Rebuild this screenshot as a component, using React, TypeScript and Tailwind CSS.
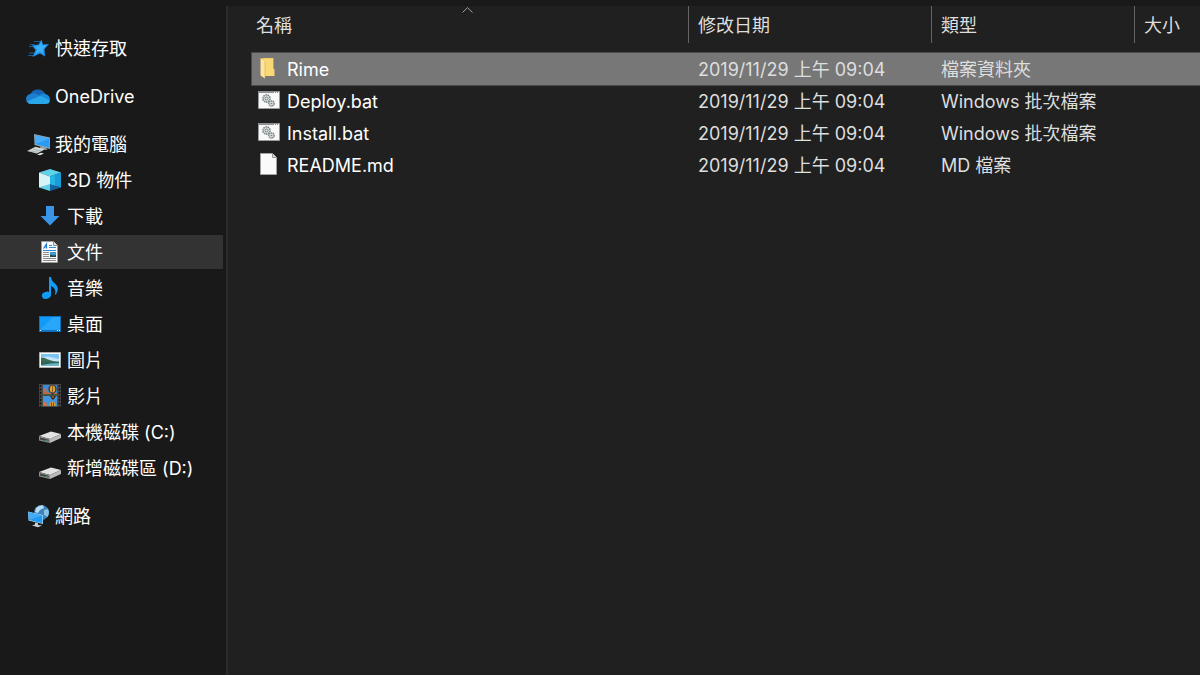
import type { ReactNode } from 'react';

const Svg = ({ children }: { children: ReactNode }) => (
  <svg viewBox="0 0 24 24" className="w-6 h-6 shrink-0" aria-hidden="true">
    {children}
  </svg>
);

const StarIcon = () => (
  <Svg>
    <path d="M8 5.5h6M4 8.5h5M3 10.5h5M3 17h5M2 19.5h5" stroke="#1b6fae" strokeWidth=".8" />
    <path d="M15.5 3.500 17 8.500 23 8 18.500 13 19 20.500 14 17.500 6.500 21 9.500 14 6 9.500 12.500 8.500Z" fill="#1f93ea" />
    <path d="M15.200 6 16.300 9.500 20.500 9.300 17 13 17.500 18 13.800 15.800 9 18.200 11.200 13.500 8.500 10.300 13.200 9.800Z" fill="#38b0fb" />
  </Svg>
);

const OneDriveIcon = () => (
  <Svg>
    <path d="M4.5 11.5a7.500 6.800 0 0 1 14.500-1.500L12 16Z" fill="#1565b4" />
    <path d="M5.5 9.500Q9 8.500 11.500 10.500L18 14 12 20H5A5 5 0 0 1 0 15Q0 10.500 5.500 9.500Z" fill="#1b7fd0" />
    <path d="M13 12Q15.500 8.500 19 9.700 24 11 24 16L19 17Z" fill="#1a8ad8" />
    <path d="M1 17.500 13 12.300Q15 11.500 17 13L24 16.500Q23.500 20 20 20H5Q2.200 20 1 17.500Z" fill="#29a5ea" />
  </Svg>
);

const ComputerIcon = () => (
  <Svg>
    <path d="M8 2 24 5.500V17L8.500 13Z" fill="#8fa6b5" />
    <path d="M9 3.300 23.500 6.500V15.800L9.300 12Z" fill="#2a9bf4" />
    <path d="M9 3.300 23.500 6.500 9.300 12Z" fill="#48adf9" />
    <path d="M13.500 14 20 15.500 21.500 18 15 17Z" fill="#98a3a6" />
    <path d="M1 19 9.500 14.800 19 17.300 11 21.500Z" fill="#cfd8d6" />
    <path d="M4 18.800 13 20.500M7 17.300 15.500 19.200" stroke="#8f9a9b" strokeWidth=".6" />
    <path d="M11 22.500 15 20.800 18 21.500 14 23.300Z" fill="#dce3e2" />
  </Svg>
);

const CubeIcon = () => (
  <Svg>
    <path d="M1 4.500 12 1 23 4.500 12 8.500Z" fill="#5cd3ea" />
    <path d="M1 4.500 12 8.500V17L1 19.500Z" fill="#d5f4f8" />
    <path d="M12 8.500 23 4.500V19.500L12 16.500Z" fill="#1b9cd9" />
    <path d="M1 19.500 12 16 12 23Z" fill="#62cfe5" />
    <path d="M12 16 23 19.500 12 23Z" fill="#1463a3" />
    <path d="M12 8.500 17 6.700V17.500L12 16Z" fill="#27b4e6" />
  </Svg>
);

const DownloadIcon = () => (
  <Svg>
    <path d="M8 2h8v10h5.500L12 21.500 2.500 12H8Z" fill="#3a94e8" />
  </Svg>
);

const DocumentIcon = () => (
  <Svg>
    <path d="M3.500 1.500H15.500L19.500 5.500V22.500H3.500Z" fill="#fafafa" stroke="#9b9b9b" />
    <path d="M15.500 1.500V5.500H19.500" fill="#e0e0e0" stroke="#8c8c8c" />
    <path d="M5.500 8.500 8.500 4V8.500M6.500 7H9" fill="none" stroke="#1e7fd0" strokeWidth="1.200" />
    <path d="M11 5.500h3M11 7.500h7M5 10.500h13" stroke="#2d8fdc" />
    <path d="M5 12.500h6M5 14.500h6M5 16.500h6M5 18.500h13M5 20.500h13" stroke="#8d8d8d" />
    <path d="M12 12h6v5h-6Z" fill="#3b9bd0" />
    <path d="M12 14.500 15 15.500 18 15V17H12Z" fill="#20454f" />
  </Svg>
);

const MusicIcon = () => (
  <Svg>
    <ellipse cx="8.300" cy="19.300" rx="4.500" ry="3.500" transform="rotate(-15 8.300 19.300)" fill="#119cf7" />
    <path d="M11 1h2Q13.500 5 17 7.500 22 12 18 18.500L16.800 18.500Q19 12.500 13 10V20H11Z" fill="#119cf7" />
  </Svg>
);

const DesktopIcon = () => (
  <Svg>
    <path d="M1 4h22v16H1Z" fill="#1271bd" />
    <path d="M2 5h20v13H2Z" fill="#119af6" />
    <path d="M2 18 15 5H22V18Z" fill="#27a6fa" />
    <path d="M2 18.500h1M19 18.500h1M21 18.500h1" stroke="#e8f4fc" />
  </Svg>
);

const PictureIcon = () => (
  <Svg>
    <path d="M1.500 4.500h21v15h-21Z" fill="#fafafa" stroke="#aeaeae" />
    <path d="M3 6h18v12H3Z" fill="#7bc4f3" />
    <path d="M3 9.500 10 8.500 21 11V14H3Z" fill="#c6e6f6" />
    <path d="M3 9.500Q7 9.500 10 11.500L18 14H3Z" fill="#3e6e58" />
    <path d="M3 14H21V18H3Z" fill="#6db4c9" />
    <path d="M3 13.500H21V15L13 15.500 3 17Z" fill="#2c6455" />
  </Svg>
);

const VideoIcon = () => (
  <Svg>
    <path d="M1 0h22v23H1Z" fill="#4a4a4a" />
    <path d="M2.500 1V23M21.500 1V23" stroke="#141414" strokeWidth="1.500" strokeDasharray="2 1.500" />
    <path d="M5 1h14v10H5Z" fill="#3c8bd9" />
    <path d="M5 12h14v10H5Z" fill="#4494de" />
    <path d="M5 8.500 8 7 11 9H19V11H5Z" fill="#c0643c" />
    <path d="M5 10h14v1H5Z" fill="#38663a" />
    <circle cx="14.500" cy="5" r="4" fill="#3b2a18" />
    <ellipse cx="14.500" cy="5" rx="2.800" ry="3.600" fill="#e2a02f" />
    <path d="M14.500 1.500v7" stroke="#6b4418" strokeWidth=".7" />
    <path d="M13.500 9h2v1.500h-2Z" fill="#3c2614" />
    <circle cx="7" cy="6" r="1.500" fill="#d66a3e" />
    <path d="M12 12h6L16.500 14.500 15 16 13.500 14.500Z" fill="#34261e" />
    <path d="M14 12.500h2v1h-2Z" fill="#d79428" />
    <path d="M5 22V18.500L8 17.500 9 22Z" fill="#dc7038" />
    <path d="M11.500 22Q11.500 17.500 14.500 17.500 17.500 17.500 17.500 22Z" fill="#d99a2c" />
    <path d="M13.500 18.500V22M15.500 18.500V22" stroke="#4d3115" strokeWidth=".7" />
  </Svg>
);

const DriveIcon = () => (
  <Svg>
    <path d="M1 16 13 11.500 23 14 12 19Z" fill="#e2e2e1" />
    <path d="M1 16 12 19V23L1 20.500Z" fill="#8c8d8c" />
    <path d="M12 19 23 14V18L12 23Z" fill="#b9bab9" />
    <path d="M2 17.500 10.500 19.800V21.500L2 19.500Z" fill="#3f4240" />
    <path d="M8 19.700h1.500v1.300h-1.500Z" fill="#46a55a" />
  </Svg>
);

const NetworkIcon = () => (
  <Svg>
    <circle cx="15.500" cy="8.500" r="7.500" fill="#3b83ba" />
    <path d="M10 4Q13 .8 17 1.200L18 4 14 6 12 9 9 8Z" fill="#b5dcf1" />
    <path d="M18 6 22 5Q24 9 21.500 13L18 11Z" fill="#8bc2e2" />
    <path d="M2 7.500 17 11V20L2.500 16.500Z" fill="#b4d8ee" />
    <path d="M2.500 8.200 16.300 11.500V19.200L3 16Z" fill="#1f9af3" />
    <path d="M2.500 8.200 16.300 11.500 3 16Z" fill="#42acf8" />
    <path d="M9 18.500 12 19.200V21L16 21.500 12 23.300 6 21.500 9 20.500Z" fill="#c8d0d2" />
  </Svg>
);

const FolderIcon = () => (
  <Svg>
    <path d="M5 1H16.500V19H5Z" fill="#eec35c" />
    <path d="M7 1.500H16V12H17.500V19H7Z" fill="#f9d876" />
    <path d="M3.500 1 8 4V21.500L3.500 18.500Z" fill="#ffe49c" />
    <path d="M8 4V21.500" stroke="#d9a94a" strokeWidth=".6" />
  </Svg>
);

const BatchIcon = () => (
  <Svg>
    <path d="M1.500 2.500h21v17h-21Z" fill="#f8f8f8" stroke="#9a9d9f" />
    <path d="M1 3h22" stroke="#8d9193" strokeWidth="2" />
    <path d="M17 3.500h1M19 3.500h1M21 3.500h1" stroke="#f0f0f0" />
    <circle cx="9.500" cy="9.500" r="3.600" fill="#e0e3e4" stroke="#7c8588" strokeWidth="1.600" strokeDasharray="1.500 .7" />
    <circle cx="9.500" cy="9.500" r="1.500" fill="none" stroke="#7c8588" />
    <circle cx="14.500" cy="14.500" r="2.600" fill="#e0e3e4" stroke="#6f7d84" strokeWidth="1.500" strokeDasharray="1.300 .6" />
    <circle cx="14.500" cy="14.500" r=".8" fill="#6f7d84" />
  </Svg>
);

const FileIcon = () => (
  <Svg>
    <path d="M3.500 .5H15.500L19.500 4.500V21.500H3.500Z" fill="#fafafa" stroke="#a3a3a3" />
    <path d="M15.500 .5V4.500H19.500" fill="#dedede" stroke="#969696" />
  </Svg>
);

type NavItem = { label: string; icon: ReactNode; active?: boolean };
type NavGroup = { root: NavItem; children?: NavItem[] };

const groups: NavGroup[] = [
  { root: { label: '快速存取', icon: <StarIcon /> } },
  { root: { label: 'OneDrive', icon: <OneDriveIcon /> } },
  {
    root: { label: '我的電腦', icon: <ComputerIcon /> },
    children: [
      { label: '3D 物件', icon: <CubeIcon /> },
      { label: '下載', icon: <DownloadIcon /> },
      { label: '文件', icon: <DocumentIcon />, active: true },
      { label: '音樂', icon: <MusicIcon /> },
      { label: '桌面', icon: <DesktopIcon /> },
      { label: '圖片', icon: <PictureIcon /> },
      { label: '影片', icon: <VideoIcon /> },
      { label: '本機磁碟 (C:)', icon: <DriveIcon /> },
      { label: '新增磁碟區 (D:)', icon: <DriveIcon /> },
    ],
  },
  { root: { label: '網路', icon: <NetworkIcon /> } },
];

const files = [
  { name: 'Rime', type: '檔案資料夾', icon: <FolderIcon />, selected: true },
  { name: 'Deploy.bat', type: 'Windows 批次檔案', icon: <BatchIcon /> },
  { name: 'Install.bat', type: 'Windows 批次檔案', icon: <BatchIcon /> },
  { name: 'README.md', type: 'MD 檔案', icon: <FileIcon /> },
];

const NavLink = ({ item, nested }: { item: NavItem; nested?: boolean }) => (
  <a
    href="#"
    aria-current={item.active ? 'page' : undefined}
    className={`flex items-center gap-[5px] h-[34px] my-px mr-[3px] whitespace-nowrap text-white ${
      nested ? 'pl-[38px]' : 'pl-[26px]'
    } ${item.active ? 'bg-[#333333]' : 'hover:bg-[#262626]'}`}
  >
    {item.icon}
    <span className="pt-0.5">{item.label}</span>
  </a>
);

const Sidebar = () => (
  <nav className="w-[228px] shrink-0 bg-[#191919] border-r-2 border-[#2b2b2b] pt-6">
    <ul className="flex flex-col gap-3">
      {groups.map((group) => (
        <li key={group.root.label} className="flow-root">
          <NavLink item={group.root} />
          {group.children && (
            <ul>
              {group.children.map((item) => (
                <li key={item.label} className="flow-root">
                  <NavLink item={item} nested />
                </li>
              ))}
            </ul>
          )}
        </li>
      ))}
    </ul>
  </nav>
);

const HeaderCell = ({ label }: { label: string }) => (
  <th className="p-0 align-top font-normal">
    <button className="block w-full h-[37px] pt-0.5 pl-[9px] border-l border-[#636363] text-left">{label}</button>
  </th>
);

const FileTable = () => (
  <table className="w-full table-fixed border-collapse text-left whitespace-nowrap">
    <colgroup>
      <col className="w-[436px]" />
      <col className="w-[243px]" />
      <col className="w-[203px]" />
      <col />
    </colgroup>
    <thead className="text-[#dedede]">
      <tr className="h-[47px]">
        <th className="p-0 align-top font-normal" aria-sort="ascending">
          <button className="relative block w-full h-[37px] pt-0.5 pl-1 text-left">
            名稱
            <svg
              viewBox="0 0 12 6"
              className="absolute top-px left-[210px] w-3 h-1.5"
              fill="none"
              stroke="#a0a0a0"
              aria-hidden="true"
            >
              <path d="M.5 5.500 5.500 .7 10.500 5.500" />
            </svg>
          </button>
        </th>
        <HeaderCell label="修改日期" />
        <HeaderCell label="類型" />
        <HeaderCell label="大小" />
      </tr>
    </thead>
    <tbody className="text-[#dedede]">
      {files.map((file) => (
        <tr
          key={file.name}
          className={`h-8 ${file.selected ? 'bg-[#777777] outline outline-1 outline-[#4a4a4a]' : 'hover:bg-[#2d2d2d]'}`}
        >
          <td className="p-0 pl-[5px]">
            <div className="flex items-center gap-1.5 text-white">
              {file.icon}
              <span className="pt-0.5">{file.name}</span>
            </div>
          </td>
          <td className="p-0 pt-0.5 pl-2.5">2019/11/29 上午 09:04</td>
          <td className="p-0 pt-0.5 pl-2.5">{file.type}</td>
          <td className="p-0" />
        </tr>
      ))}
    </tbody>
  </table>
);

export default function App() {
  return (
    <div className="flex flex-col min-h-screen bg-[#191919] pt-1.5 text-[18px] leading-6 font-['Inter','Noto_Sans_CJK_TC',sans-serif]">
      <div className="flex grow">
        <Sidebar />
        <main className="grow min-w-0 bg-[#202020] pl-6">
          <FileTable />
        </main>
      </div>
    </div>
  );
}
